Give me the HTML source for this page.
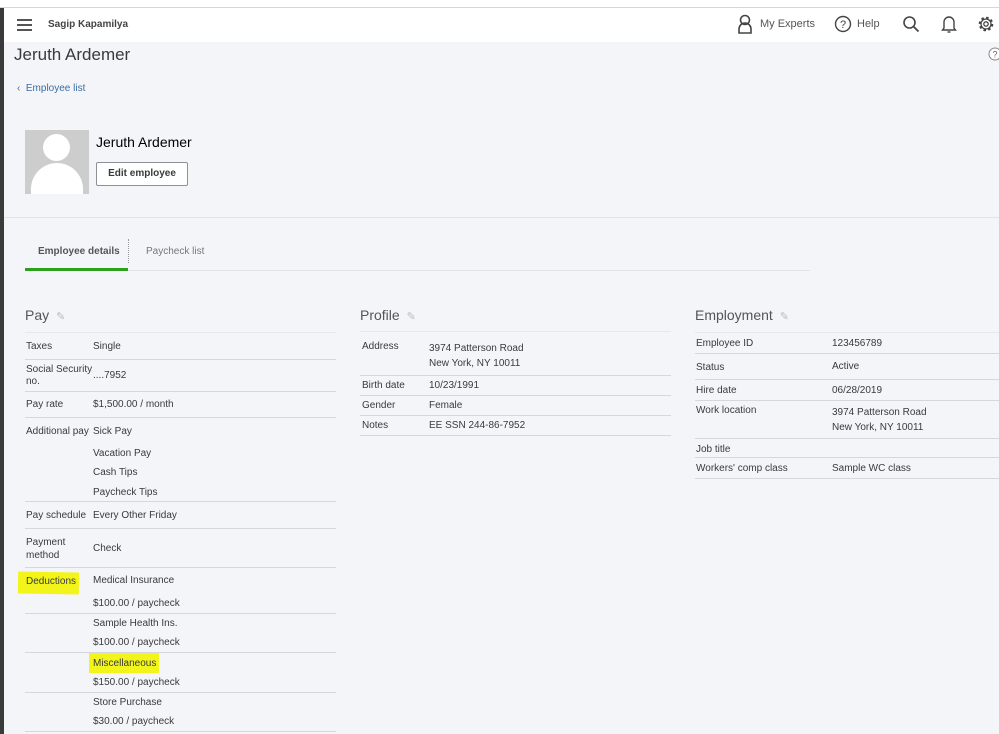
<!DOCTYPE html>
<html><head><meta charset="utf-8"><style>
*{margin:0;padding:0;box-sizing:border-box}
body{width:999px;height:734px;overflow:hidden;background:#f4f5f8;font-family:"Liberation Sans",sans-serif;color:#393a3d;position:relative;font-size:10px}
.a{position:absolute;white-space:nowrap}
.l{position:absolute;height:1px;background:#d4d7dc}
.lf{position:absolute;height:1px;background:#e6e8eb}
.h{font-size:14px;color:#555}
.hl{background:#f3f51a}
</style></head><body>
<div class="a" style="left:0;top:0;width:999px;height:7px;background:#fff"></div>
<div class="a" style="left:0;top:7px;width:999px;height:1px;background:#d6d6d6"></div>
<div class="a" style="left:0;top:8px;width:999px;height:34px;background:#fff"></div>
<div class="a" style="left:0;top:8px;width:4px;height:726px;background:#3a3a3a"></div>
<div class="a" style="left:17px;top:19px;width:15px;height:2px;background:#555;box-shadow:0 5px 0 #555,0 10px 0 #555"></div>
<div class="a" style="left:48px;top:19px;font-size:10px;font-weight:bold;color:#444">Sagip Kapamilya</div>
<svg class="a" style="left:737px;top:14px" width="16" height="20" viewBox="0 0 16 20"><circle cx="8" cy="6" r="4.5" fill="none" stroke="#444" stroke-width="1.6"/><path d="M2 19v-4a6 6 0 0 1 12 0v4z" fill="none" stroke="#444" stroke-width="1.6"/></svg>
<div class="a" style="left:760px;top:18px;font-size:11px;color:#555">My Experts</div>
<svg class="a" style="left:834px;top:15px" width="18" height="18"><circle cx="9" cy="9" r="7.5" fill="none" stroke="#444" stroke-width="1.4"/><text x="9" y="13" font-size="11" text-anchor="middle" fill="#444" font-family="Liberation Sans">?</text></svg>
<div class="a" style="left:857px;top:18px;font-size:11px;color:#555">Help</div>
<svg class="a" style="left:902px;top:15px" width="18" height="18"><circle cx="7.5" cy="7.5" r="5.5" fill="none" stroke="#444" stroke-width="1.6"/><path d="M11.5 11.5l5 5" stroke="#444" stroke-width="1.8"/></svg>
<svg class="a" style="left:941px;top:14px" width="16" height="20"><path d="M3 14V8a5 5 0 0 1 10 0v6l1.5 2h-13z" fill="none" stroke="#444" stroke-width="1.4"/><path d="M6.5 18h3" stroke="#444" stroke-width="1.4"/></svg>
<svg class="a" style="left:977px;top:15px" width="18" height="18"><circle cx="9" cy="9" r="6" fill="none" stroke="#444" stroke-width="2.6" stroke-dasharray="2.4 2.3"/><circle cx="9" cy="9" r="5" fill="none" stroke="#444" stroke-width="1.3"/><circle cx="9" cy="9" r="2.2" fill="none" stroke="#444" stroke-width="1.3"/></svg>
<div class="a" style="left:14px;top:45px;font-size:17px;color:#393a3d">Jeruth Ardemer</div>
<svg class="a" style="left:988px;top:47px" width="14" height="14"><circle cx="7" cy="7" r="6" fill="#fff" stroke="#888"/><text x="7" y="10.5" font-size="9" text-anchor="middle" fill="#666" font-family="Liberation Sans">?</text></svg>
<div class="a" style="left:17px;top:83px;font-size:10px;color:#3a6ea5">‹ &nbsp;Employee list</div>
<div class="a" style="left:25px;top:130px;width:64px;height:64px;background:#cdcdcd;overflow:hidden"><div class="a" style="left:18px;top:4px;width:27px;height:27px;border-radius:50%;background:#fff"></div><div class="a" style="left:6px;top:33px;width:52px;height:44px;border-radius:26px 26px 0 0;background:#fff"></div></div>
<div class="a" style="left:96px;top:134px;font-size:14px;color:#000">Jeruth Ardemer</div>
<div class="a" style="left:96px;top:162px;width:92px;height:24px;border:1px solid #8d9096;border-radius:2px;background:#fff;font-size:10px;font-weight:bold;text-align:center;line-height:22px;color:#393a3d">Edit employee</div>
<div class="a" style="left:4px;top:217px;width:995px;height:1px;background:#e1e3e6"></div>
<div class="a" style="left:38px;top:246px;font-size:10px;color:#555;font-weight:bold">Employee details</div>
<div class="a" style="left:128px;top:239px;width:1px;height:24px;border-left:1px dotted #999"></div>
<div class="a" style="left:146px;top:246px;font-size:10px;color:#777">Paycheck list</div>
<div class="a" style="left:25px;top:268px;width:103px;height:3px;background:#2ca01c"></div>
<div class="a" style="left:128px;top:270px;width:682px;height:1px;background:#e1e3e6"></div>

<div class="a h" style="left:25px;top:307px">Pay <span style="color:#bbb;font-size:11px">&nbsp;✎</span></div>
<div class="lf" style="left:25px;top:332px;width:311px"></div>
<div class="a" style="left:26px;top:341px">Taxes</div><div class="a" style="left:93px;top:341px">Single</div>
<div class="l" style="left:25px;top:359px;width:311px"></div>
<div class="a" style="left:26px;top:364px;line-height:12px">Social Security<br>no.</div><div class="a" style="left:93px;top:370px">....7952</div>
<div class="l" style="left:25px;top:391px;width:311px"></div>
<div class="a" style="left:26px;top:399px">Pay rate</div><div class="a" style="left:93px;top:399px">$1,500.00 / month</div>
<div class="l" style="left:25px;top:417px;width:311px"></div>
<div class="a" style="left:26px;top:426px">Additional pay</div><div class="a" style="left:93px;top:426px">Sick Pay</div>
<div class="a" style="left:93px;top:448px">Vacation Pay</div>
<div class="a" style="left:93px;top:467px">Cash Tips</div>
<div class="a" style="left:93px;top:487px">Paycheck Tips</div>
<div class="l" style="left:25px;top:501px;width:311px"></div>
<div class="a" style="left:26px;top:510px">Pay schedule</div><div class="a" style="left:93px;top:510px">Every Other Friday</div>
<div class="l" style="left:25px;top:528px;width:311px"></div>
<div class="a" style="left:26px;top:536px;line-height:13px">Payment<br>method</div><div class="a" style="left:93px;top:543px">Check</div>
<div class="l" style="left:25px;top:567px;width:311px"></div>
<div class="a hl" style="left:18px;top:572px;width:61px;height:22px;transform:rotate(1deg)"></div>
<div class="a" style="left:26px;top:576px">Deductions</div><div class="a" style="left:93px;top:575px">Medical Insurance</div>
<div class="a" style="left:93px;top:598px">$100.00 / paycheck</div>
<div class="l" style="left:25px;top:613px;width:311px"></div>
<div class="a" style="left:93px;top:618px">Sample Health Ins.</div>
<div class="a" style="left:93px;top:637px">$100.00 / paycheck</div>
<div class="l" style="left:25px;top:652px;width:311px"></div>
<div class="a hl" style="left:89px;top:653px;width:70px;height:20px"></div>
<div class="a" style="left:93px;top:658px">Miscellaneous</div>
<div class="a" style="left:93px;top:677px">$150.00 / paycheck</div>
<div class="l" style="left:25px;top:692px;width:311px"></div>
<div class="a" style="left:93px;top:697px">Store Purchase</div>
<div class="a" style="left:93px;top:716px">$30.00 / paycheck</div>
<div class="l" style="left:25px;top:731px;width:311px"></div>

<div class="a h" style="left:360px;top:307px">Profile <span style="color:#bbb;font-size:11px">&nbsp;✎</span></div>
<div class="lf" style="left:360px;top:331px;width:311px"></div>
<div class="a" style="left:362px;top:341px">Address</div><div class="a" style="left:429px;top:341px;line-height:15px">3974 Patterson Road<br>New York, NY 10011</div>
<div class="l" style="left:360px;top:375px;width:311px"></div>
<div class="a" style="left:362px;top:380px">Birth date</div><div class="a" style="left:429px;top:380px">10/23/1991</div>
<div class="l" style="left:360px;top:395px;width:311px"></div>
<div class="a" style="left:362px;top:400px">Gender</div><div class="a" style="left:429px;top:400px">Female</div>
<div class="l" style="left:360px;top:415px;width:311px"></div>
<div class="a" style="left:362px;top:420px">Notes</div><div class="a" style="left:429px;top:420px">EE SSN 244-86-7952</div>
<div class="l" style="left:360px;top:435px;width:311px"></div>

<div class="a h" style="left:695px;top:307px">Employment <span style="color:#bbb;font-size:11px">&nbsp;✎</span></div>
<div class="lf" style="left:695px;top:332px;width:304px"></div>
<div class="a" style="left:696px;top:338px">Employee ID</div><div class="a" style="left:832px;top:338px">123456789</div>
<div class="l" style="left:695px;top:353px;width:304px"></div>
<div class="a" style="left:696px;top:362px">Status</div><div class="a" style="left:832px;top:361px">Active</div>
<div class="l" style="left:695px;top:379px;width:304px"></div>
<div class="a" style="left:696px;top:385px">Hire date</div><div class="a" style="left:832px;top:385px">06/28/2019</div>
<div class="l" style="left:695px;top:400px;width:304px"></div>
<div class="a" style="left:696px;top:405px">Work location</div><div class="a" style="left:832px;top:405px;line-height:15px">3974 Patterson Road<br>New York, NY 10011</div>
<div class="l" style="left:695px;top:438px;width:304px"></div>
<div class="a" style="left:696px;top:444px">Job title</div>
<div class="l" style="left:695px;top:457px;width:304px"></div>
<div class="a" style="left:696px;top:463px">Workers' comp class</div><div class="a" style="left:832px;top:463px">Sample WC class</div>
<div class="l" style="left:695px;top:478px;width:304px"></div>
</body></html>
